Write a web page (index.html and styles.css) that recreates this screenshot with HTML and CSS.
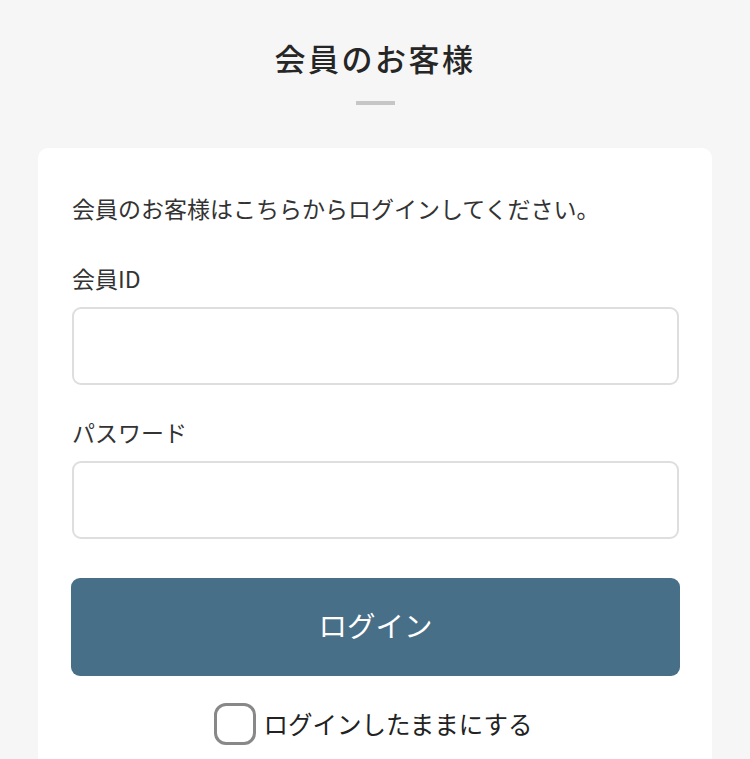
FILE: index.html
```html
<!DOCTYPE html>
<html lang="ja">
<head>
<meta charset="utf-8">
<title>会員のお客様</title>
<link rel="stylesheet" href="styles.css">
</head>
<body>
<main class="page">
  <h1 class="title">会員のお客様</h1>
  <div class="divider"></div>
  <section class="card">
    <p class="intro">会員のお客様はこちらからログインしてください。</p>
    <form class="form">
      <label class="label" for="mid">会員ID</label>
      <input class="input" id="mid" type="text">
      <label class="label label-second" for="pw">パスワード</label>
      <input class="input" id="pw" type="password">
      <button class="btn" type="button">ログイン</button>
      <label class="keep">
        <span class="box"></span>
        <span class="keep-text">ログインしたままにする</span>
      </label>
    </form>
  </section>
</main>
</body>
</html>
```
FILE: styles.css
```css
* { box-sizing: border-box; }
html, body {
  margin: 0;
  padding: 0;
  background: #f6f6f6;
}
body {
  font-family: "Noto Sans CJK JP", "Noto Sans", sans-serif;
  color: #333;
  overflow: hidden;
  height: 759px;
}
.page {
  display: flex;
  flex-direction: column;
  align-items: center;
  padding-top: 36px;
}
.title {
  margin: 0;
  font-size: 31px;
  line-height: 44px;
  font-weight: 500;
  letter-spacing: 2.5px;
  color: #262626;
}
.divider {
  width: 39px;
  height: 4px;
  background: #c6c6c6;
  margin-top: 21px;
}
.card {
  align-self: stretch;
  margin: 43px 38px 0;
  background: #fff;
  border-radius: 10px;
  padding: 44px 33px 40px 34px;
}
.intro {
  margin: 0;
  font-size: 23px;
  line-height: 32px;
  color: #333;
}
.form {
  display: flex;
  flex-direction: column;
  margin-top: 38px;
}
.label {
  font-size: 23px;
  line-height: 32px;
  color: #333;
}
.label-second {
  margin-top: 31px;
}
.input {
  margin-top: 13px;
  height: 78px;
  border: 2px solid #dedede;
  border-radius: 9px;
  background: #fff;
  font-size: 22px;
  padding: 0 16px;
  outline: none;
}
.btn {
  margin-top: 39px;
  margin-left: -1px;
  margin-right: -1px;
  height: 98px;
  border: none;
  border-radius: 9px;
  background: #476f88;
  color: #fff;
  font-family: "Noto Sans CJK JP", "Noto Sans", sans-serif;
  font-size: 28.5px;
  line-height: 32px;
  padding: 0 0 4px;
}
.keep {
  display: flex;
  align-items: center;
  justify-content: center;
  margin-top: 27px;
  gap: 7px;
}
.box {
  width: 42px;
  height: 42px;
  border: 3px solid #888;
  border-radius: 12px;
  background: #fff;
  flex: none;
}
.keep-text {
  font-size: 24.5px;
  line-height: 32px;
  color: #222;
  margin-right: 4px;
}
```
